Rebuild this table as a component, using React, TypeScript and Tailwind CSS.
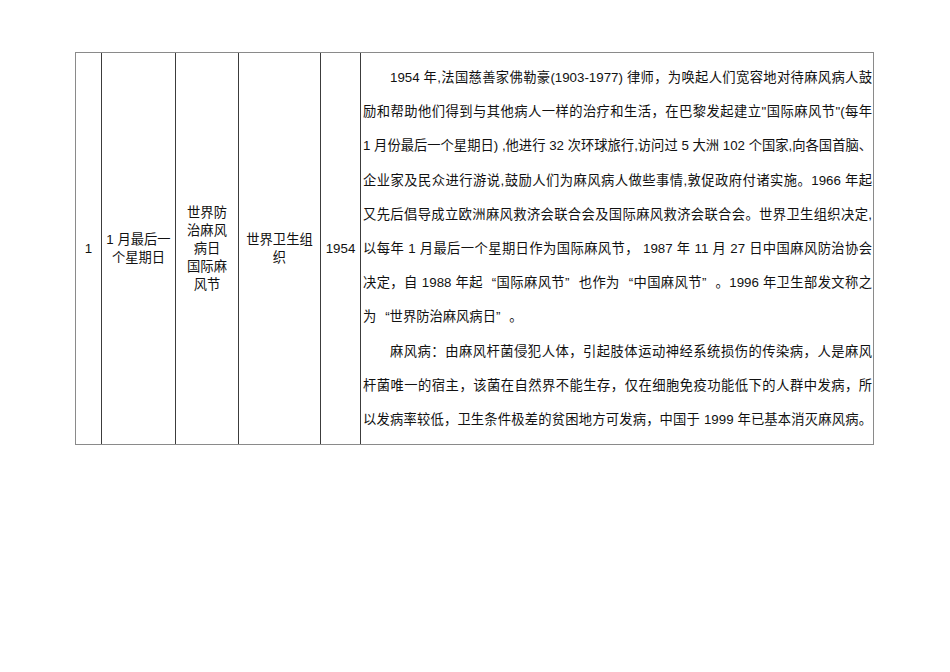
const lines: { text: string; indent?: boolean; last?: boolean }[] = [
  { text: '1954 年,法国慈善家佛勒豪(1903-1977) 律师，为唤起人们宽容地对待麻风病人鼓', indent: true },
  { text: '励和帮助他们得到与其他病人一样的治疗和生活，在巴黎发起建立"国际麻风节"(每年' },
  { text: '1 月份最后一个星期日) ,他进行 32 次环球旅行,访问过 5 大洲 102 个国家,向各国首脑、' },
  { text: '企业家及民众进行游说,鼓励人们为麻风病人做些事情,敦促政府付诸实施。1966 年起' },
  { text: '又先后倡导成立欧洲麻风救济会联合会及国际麻风救济会联合会。世界卫生组织决定,' },
  { text: '以每年 1 月最后一个星期日作为国际麻风节， 1987 年 11 月 27 日中国麻风防治协会' },
  { text: '决定，自 1988 年起“国际麻风节”也作为“中国麻风节”。1996 年卫生部发文称之' },
  { text: '为“世界防治麻风病日”。', last: true },
  { text: '麻风病：由麻风杆菌侵犯人体，引起肢体运动神经系统损伤的传染病，人是麻风', indent: true },
  { text: '杆菌唯一的宿主，该菌在自然界不能生存，仅在细胞免疫功能低下的人群中发病，所' },
  { text: '以发病率较低，卫生条件极差的贫困地方可发病，中国于 1999 年已基本消灭麻风病。' },
];

// curly quotes are drawn full width, as in a CJK font
const withQuotes = (text: string) =>
  text.split(/([“”])/).map((part, i) =>
    part === '“' ? (
      <span key={i} className="inline-block w-[1em] text-right [text-align-last:right]">
        “
      </span>
    ) : part === '”' ? (
      <span key={i} className="inline-block w-[1em] text-left [text-align-last:left]">
        ”
      </span>
    ) : (
      part
    )
  );

const Cell = ({ children, last }: { children: React.ReactNode; last?: boolean }) => (
  <div
    className={
      'flex items-center justify-center text-center leading-[18px] ' +
      (last ? '' : 'border-r border-[#3c3c3c]')
    }
  >
    <div>{children}</div>
  </div>
);

export default function App() {
  return (
    <div className="min-h-[672px] w-[950px] bg-white pl-[75px] pt-[52px] font-['Liberation_Sans','Noto_Sans_CJK_SC',sans-serif] text-[13.3px] text-[#111]">
      <div className="grid w-[799px] grid-cols-[26px_74px_63px_82px_40px_1fr] border border-[#8a8a8a]">
        <Cell>1</Cell>
        <Cell>
          1 月最后一
          <br />
          个星期日
        </Cell>
        <Cell>
          世界防
          <br />
          治麻风
          <br />
          病日
          <br />
          国际麻
          <br />
          风节
        </Cell>
        <Cell>
          世界卫生组
          <br />
          织
        </Cell>
        <Cell>1954</Cell>
        <div className="pb-[7px] pl-[2px] pr-[3px] pt-[8px] leading-[34.2px]">
          {lines.map((l, i) => (
            <div
              key={i}
              className={
                'whitespace-nowrap ' +
                (l.last ? 'text-left' : 'text-justify [text-align-last:justify]') +
                (l.indent ? ' pl-[27px]' : '')
              }
            >
              {withQuotes(l.text)}
            </div>
          ))}
        </div>
      </div>
    </div>
  );
}
